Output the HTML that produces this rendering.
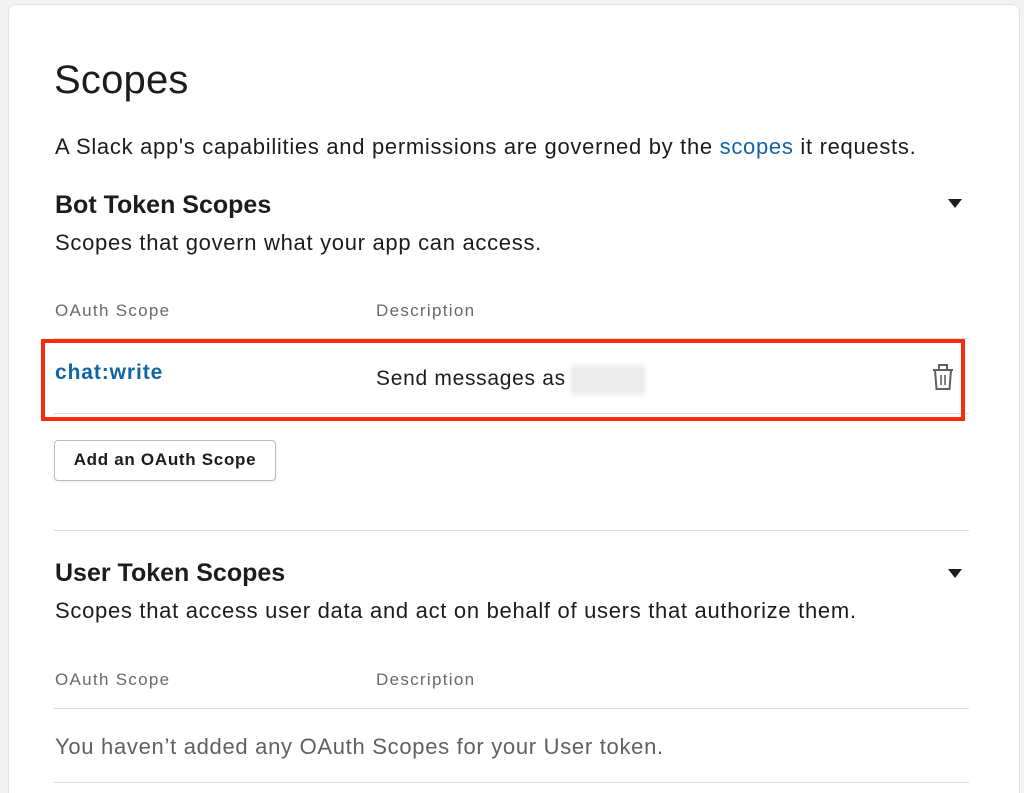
<!DOCTYPE html>
<html><head><meta charset="utf-8"><style>
html,body{margin:0;padding:0;background:#f3f3f3;width:1024px;height:793px;overflow:hidden}
body{font-family:"Liberation Sans",sans-serif;color:#1d1c1d;position:relative}
.card{position:absolute;left:8px;top:4px;width:1010px;height:800px;background:#fff;border:1px solid #e2e2e2;border-radius:8px}
.t{position:absolute;white-space:nowrap;line-height:1}
.b{font-size:22px;letter-spacing:0.7px}
.line{position:absolute;left:54px;width:915px;height:1px;background:#dddddd}
.tri{position:absolute;width:0;height:0;border-left:7px solid transparent;border-right:7px solid transparent;border-top:9px solid #1d1c1d}
.hdr{font-size:17px;color:#696969;letter-spacing:1.3px}
</style></head><body>
<div class="card"></div>
<div class="t" style="left:54px;top:60px;font-size:40px;letter-spacing:0.2px">Scopes</div>
<div class="t b" style="left:55px;top:136px">A Slack app's capabilities and permissions are governed by the <span style="color:#1264a3">scopes</span> it requests.</div>
<div class="t" style="left:55px;top:193px;font-size:25px;font-weight:bold;letter-spacing:0">Bot Token Scopes</div>
<div class="tri" style="left:948px;top:199px"></div>
<div class="t b" style="left:55px;top:232px">Scopes that govern what your app can access.</div>
<div class="t hdr" style="left:55px;top:302px">OAuth Scope</div>
<div class="t hdr" style="left:376px;top:302px">Description</div>
<div class="line" style="top:338px"></div>
<div class="line" style="top:413px"></div>
<div style="position:absolute;left:41px;top:339px;width:916px;height:74px;border:4px solid #fb2a0c"></div>
<div class="t" style="left:55px;top:362px;font-size:21px;font-weight:bold;color:#1264a3;letter-spacing:0.9px">chat:write</div>
<div class="t" style="left:376px;top:368px;font-size:21px;letter-spacing:0.7px">Send messages as</div>
<div style="position:absolute;left:571px;top:365px;width:74px;height:30px;background:#ececec;filter:blur(2px)"></div>
<svg style="position:absolute;left:931px;top:362px" width="24" height="29" viewBox="0 0 24 29" fill="none" stroke="#616061" stroke-width="2">
<path d="M2 8h20M8 8V3h8v5"/><path d="M4 8l1.5 19h13L20 8"/><path d="M10 13v10M14 13v10" stroke-width="1.6"/></svg>
<div style="position:absolute;left:54px;top:440px;width:220px;height:39px;border:1px solid #bbb;border-radius:4px;box-shadow:0 1px 2px rgba(0,0,0,.08)"></div>
<div class="t" style="left:54px;top:451px;width:222px;text-align:center;font-size:17px;font-weight:bold;letter-spacing:0.7px">Add an OAuth Scope</div>
<div class="line" style="top:530px"></div>
<div class="t" style="left:55px;top:561px;font-size:25px;font-weight:bold;letter-spacing:0">User Token Scopes</div>
<div class="tri" style="left:948px;top:569px"></div>
<div class="t b" style="left:55px;top:600px">Scopes that access user data and act on behalf of users that authorize them.</div>
<div class="t hdr" style="left:55px;top:671px">OAuth Scope</div>
<div class="t hdr" style="left:376px;top:671px">Description</div>
<div class="line" style="top:708px"></div>
<div class="t b" style="left:55px;top:736px;color:#616061">You haven’t added any OAuth Scopes for your User token.</div>
<div class="line" style="top:782px"></div>
</body></html>
